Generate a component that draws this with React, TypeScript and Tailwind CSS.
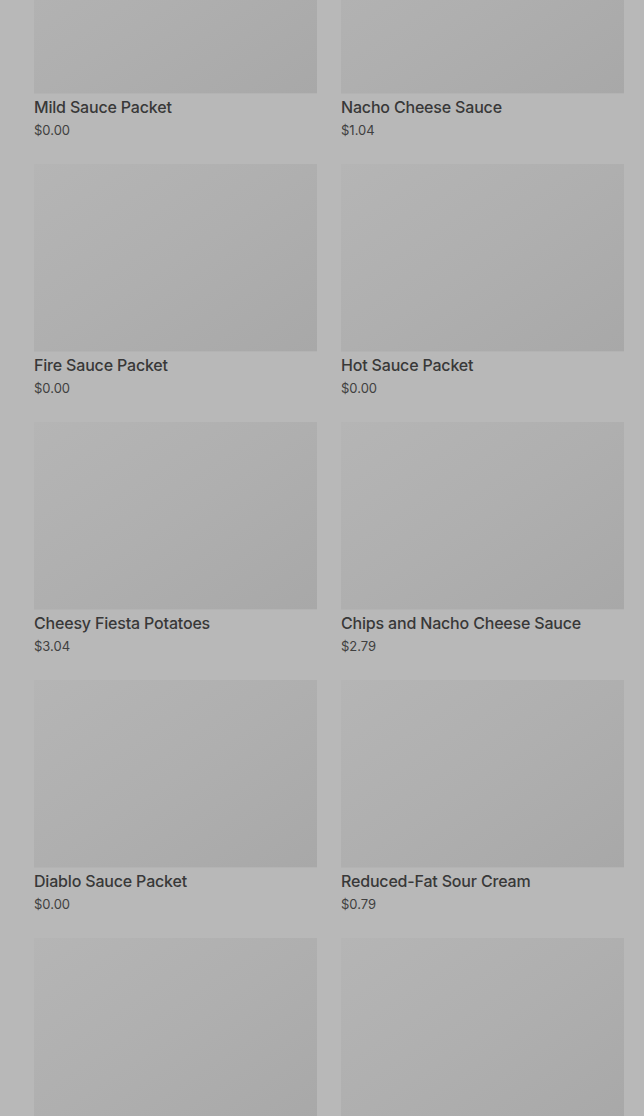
const items = [
  { name: "Mild Sauce Packet", price: "$0.00" },
  { name: "Nacho Cheese Sauce", price: "$1.04" },
  { name: "Fire Sauce Packet", price: "$0.00" },
  { name: "Hot Sauce Packet", price: "$0.00" },
  { name: "Cheesy Fiesta Potatoes", price: "$3.04" },
  { name: "Chips and Nacho Cheese Sauce", price: "$2.79" },
  { name: "Diablo Sauce Packet", price: "$0.00" },
  { name: "Reduced-Fat Sour Cream", price: "$0.79" },
  { name: "", price: "" },
  { name: "", price: "" },
];

function ProductCard({ name, price }: { name: string; price: string }) {
  return (
    <div className="flex flex-col">
      <div className="h-[188px] w-full bg-linear-to-br from-[#b5b5b5] via-[#afafaf] to-[#a8a8a8] border-b border-[#b3b3b3]" />
      {name && (
        <>
          <p className="mt-[1px] text-[16px] leading-6 font-medium tracking-[-0.18px] text-[#383838]">{name}</p>
          <p className="mt-[1px] text-[13px] leading-5 text-[#404040]">{price}</p>
        </>
      )}
    </div>
  );
}

export default function App() {
  return (
    <main
      className="h-[1116px] overflow-hidden bg-[#b8b8b8] pl-[34px] pr-[20px]"
      style={{ fontFamily: "Inter, 'Noto Sans', sans-serif" }}
    >
      <div className="-mt-[94px] grid grid-cols-2 gap-x-6 gap-y-6">
        {items.map((item, i) => (
          <ProductCard key={i} name={item.name} price={item.price} />
        ))}
      </div>
    </main>
  );
}
